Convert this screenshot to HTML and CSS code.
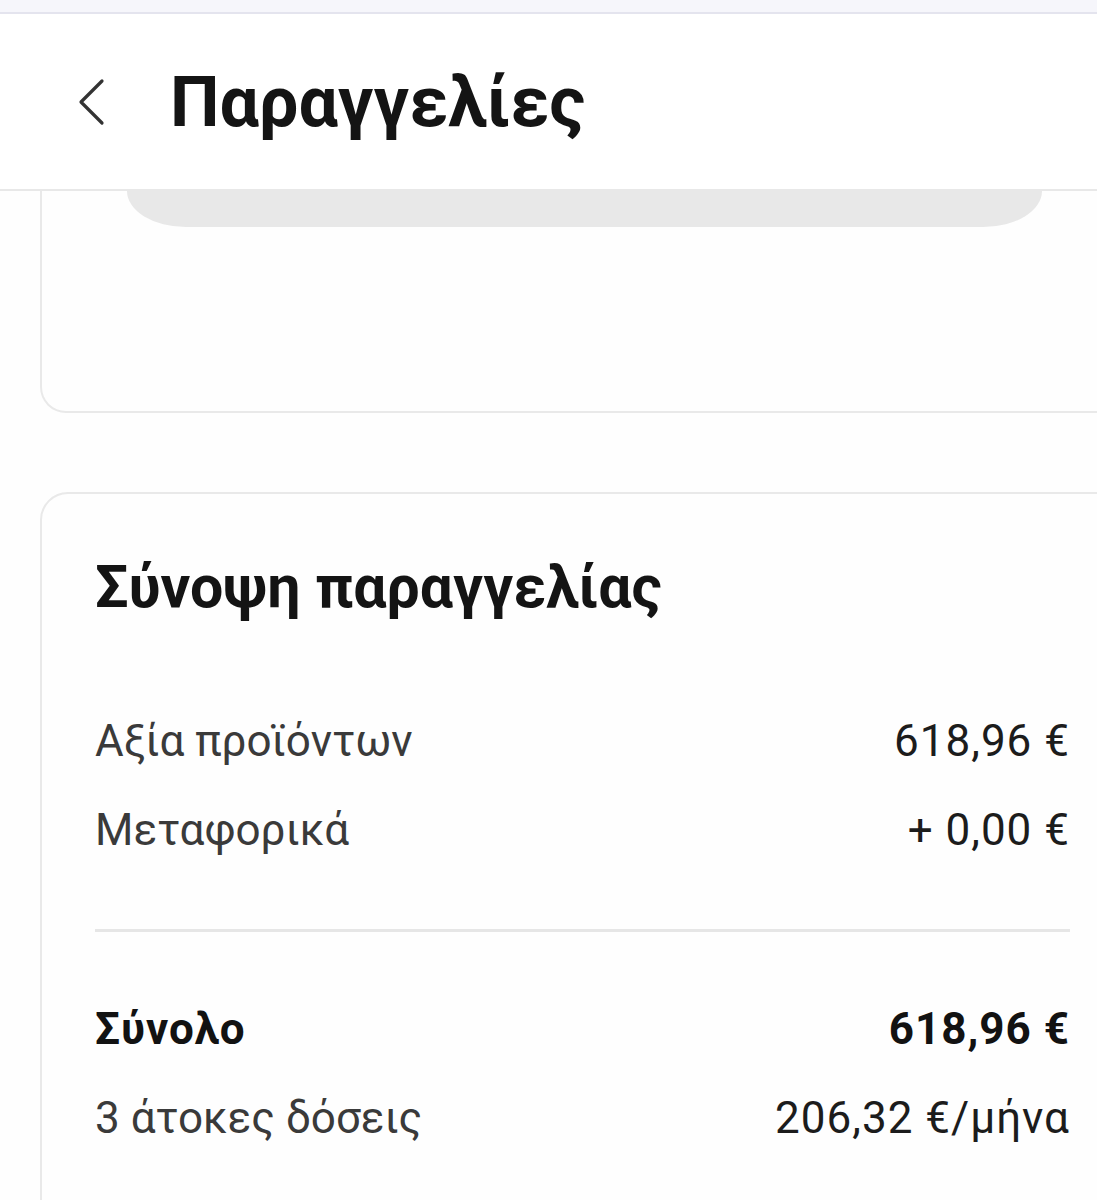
FILE: index.html
```html
<!DOCTYPE html>
<html lang="el">
<head>
<meta charset="utf-8">
<title>Παραγγελίες</title>
<link rel="stylesheet" href="styles.css">
</head>
<body>
<div class="topstrip"></div>
<header class="header">
  <svg class="back" width="40" height="50" viewBox="0 0 40 50" aria-hidden="true">
    <path d="M30 4 L9 25 L30 46" fill="none" stroke="#333" stroke-width="3.2" stroke-linecap="round" stroke-linejoin="round"/>
  </svg>
  <h1 class="title">Παραγγελίες</h1>
</header>
<main class="content">
  <section class="card card-prev">
    <div class="pill"></div>
  </section>
  <section class="card card-summary">
    <h2 class="summary-title">Σύνοψη παραγγελίας</h2>
    <div class="row"><span class="label">Αξία προϊόντων</span><span class="value">618,96 €</span></div>
    <div class="row"><span class="label">Μεταφορικά</span><span class="value">+ 0,00 €</span></div>
    <hr class="divider">
    <div class="row total"><span class="label">Σύνολο</span><span class="value">618,96 €</span></div>
    <div class="row"><span class="label">3 άτοκες δόσεις</span><span class="value">206,32 €/μήνα</span></div>
  </section>
</main>
</body>
</html>
```
FILE: styles.css
```css
html, body {
  margin: 0;
  padding: 0;
  background: #fefefe;
  overflow: hidden;
}
body {
  width: 1097px;
  height: 1200px;
  font-family: Roboto, "Noto Sans", sans-serif;
  color: #1a1a1a;
}
.topstrip {
  height: 12px;
  background: #f6f6fb;
  border-bottom: 2px solid #e4e4ee;
}
.header {
  height: 177px;
  background: #fff;
  border-bottom: 2px solid #e8e8e8;
  display: flex;
  align-items: center;
  box-sizing: border-box;
  padding-left: 72px;
}
.back {
  flex: none;
  margin-right: 58px;
}
.title {
  margin: 0;
  font-size: 70px;
  font-weight: 700;
  line-height: 1;
  color: #141414;
}
.content {
  padding-left: 40px;
  margin-right: -28px;
}
.card {
  background: #fefefe;
  border: 2px solid #e9e9e9;
  border-radius: 28px;
}
.card-prev {
  border-top: none;
  border-radius: 0 0 0 26px;
  height: 222px;
  box-sizing: border-box;
  padding: 0 85px;
}
.pill {
  height: 36px;
  width: 915px;
  background: #e8e8e8;
  border-radius: 0 0 62px 62px / 0 0 38px 38px;
}
.card-summary {
  margin-top: 79px;
  padding: 60px 53px 0 53px;
  height: 900px;
}
.summary-title {
  margin: 0 0 76px 0;
  font-size: 59px;
  line-height: 66px;
  font-weight: 700;
  color: #141414;
}
.row {
  height: 89px;
  display: flex;
  justify-content: space-between;
  align-items: center;
  font-size: 44px;
}
.label {
  color: #3a3a3a;
}
.value {
  color: #1c1c1c;
  letter-spacing: 1px;
}
.row.total .label,
.row.total .value {
  font-weight: 700;
  color: #121212;
}
.row.total .label {
  letter-spacing: 1px;
}
.divider {
  border: none;
  height: 3px;
  background: #e6e6e6;
  margin: 55px 0 52px 0;
}
```
